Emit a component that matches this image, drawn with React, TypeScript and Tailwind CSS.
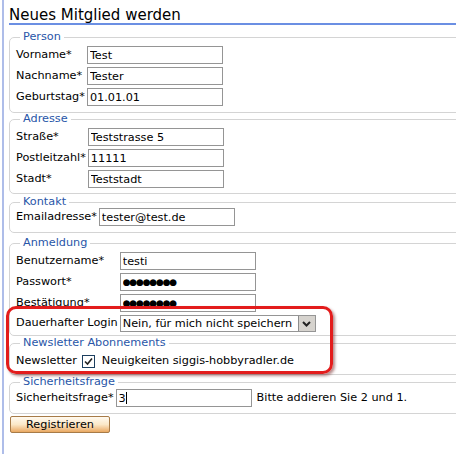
import React from 'react'

const font = { fontFamily: '"DejaVu Sans", Verdana, sans-serif' }

function Field({ value, dots }: { value: string; dots?: boolean }) {
  return (
    <input
      readOnly
      value={value}
      className={`h-[18px] w-[136px] border border-[#959595] bg-white px-[2px] leading-[16px] text-black outline-none ${dots ? 'text-[9px] tracking-[-1.2px]' : 'text-[11.25px]'}`}
      style={font}
    />
  )
}

function Group({ legend, className, children }: { legend: string; className: string; children: React.ReactNode }) {
  return (
    <fieldset className={`rounded-[5px] border border-[#d4d4d4] px-[6px] ${className}`}>
      <legend className="ml-[4px] px-[3px] text-[11.25px] leading-[12px] text-[#2856a8]">{legend}</legend>
      {children}
    </fieldset>
  )
}

export default function App() {
  return (
    <div className="relative h-[454px] w-[456px] overflow-hidden bg-white pl-[2px] text-[11.25px] text-black" style={font}>
      <div className="h-full w-[490px] border-l-2 border-[#aebde9] pl-[5px]">
        <h1 className="border-b-2 border-[#6b8fe3] pt-[8px] text-[15px] leading-[15px] font-normal">Neues Mitglied werden</h1>

        <Group legend="Person" className="mt-[6px] pt-[3px] pb-[6px]">
          <div className="grid grid-cols-[auto_auto] justify-start items-center gap-x-[2px] gap-y-[3px]">
            <span>Vorname*</span>
            <Field value="Test" />
            <span>Nachname*</span>
            <Field value="Tester" />
            <span>Geburtstag*</span>
            <Field value="01.01.01" />
          </div>
        </Group>

        <Group legend="Adresse" className="mt-0 pt-[3px] pb-[5px]">
          <div className="grid grid-cols-[auto_auto] justify-start items-center gap-x-[2px] gap-y-[3px]">
            <span>Straße*</span>
            <Field value="Teststrasse 5" />
            <span>Postleitzahl*</span>
            <Field value="11111" />
            <span>Stadt*</span>
            <Field value="Teststadt" />
          </div>
        </Group>

        <Group legend="Kontakt" className="mt-[2px] pt-0 pb-[6px]">
          <div className="grid grid-cols-[auto_auto] justify-start items-center gap-x-[2px]">
            <span>Emailadresse*</span>
            <Field value="tester@test.de" />
          </div>
        </Group>

        <Group legend="Anmeldung" className="mt-[4px] pt-[3px] pb-[3px]">
          <div className="grid grid-cols-[auto_auto] justify-start items-center gap-x-[2px] gap-y-[3px]">
            <span>Benutzername*</span>
            <Field value="testi" />
            <span>Passwort*</span>
            <Field value="●●●●●●●●" dots />
            <span>Bestätigung*</span>
            <Field value="●●●●●●●●" dots />
            <span>Dauerhafter Login</span>
            <div className="flex h-[17px] w-[196px] items-center border border-[#959595] bg-white">
              <span className="flex-1 whitespace-nowrap pl-[2px] leading-[15px]">Nein, für mich nicht speichern</span>
              <span className="flex h-[15px] w-[17px] items-center justify-center border-l border-[#8c8c8c] bg-[#d6d3ce]">
                <svg width="9" height="6" viewBox="0 0 9 6">
                  <path d="M1 1 L4.5 4.5 L8 1" fill="none" stroke="#222" strokeWidth="2" />
                </svg>
              </span>
            </div>
          </div>
        </Group>

        <Group legend="Newsletter Abonnements" className="mt-[1px] pt-[3px] pb-[4px]">
          <div className="flex h-[18px] items-center">
            <span>Newsletter</span>
            <span className="ml-[5px] flex h-[13px] w-[13px] items-center justify-center border border-[#1c3f60] bg-white">
              <svg width="9" height="9" viewBox="0 0 9 9">
                <path d="M1 4.5 L3.5 7 L8 1.5" fill="none" stroke="#222" strokeWidth="1.6" />
              </svg>
            </span>
            <span className="ml-[7px]">Neuigkeiten siggis-hobbyradler.de</span>
          </div>
        </Group>

        <Group legend="Sicherheitsfrage" className="mt-[1px] pt-[1px] pb-[6px]">
          <div className="flex items-center">
            <span className="mr-[2px]">Sicherheitsfrage*</span>
            <div className="relative">
              <Field value="3" />
              <span className="absolute left-[10px] top-[3px] h-[12px] w-px bg-black" />
            </div>
            <span className="ml-[5px]">Bitte addieren Sie 2 und 1.</span>
          </div>
        </Group>

        <button
          className="mt-[2px] ml-[1px] h-[17px] w-[100px] rounded-[2px] border border-[#a77b48] bg-gradient-to-b from-[#fffaf0] via-[#fbe8c8] to-[#e9a860] text-[11.25px] leading-[15px] text-black"
          style={font}
        >
          Registrieren
        </button>
      </div>

      <div className="pointer-events-none absolute left-[6px] top-[306px] h-[68px] w-[327px] rounded-[10px] border-[3px] border-[#e31c1c] shadow-[2px_2px_3px_rgba(90,0,0,0.45)]" />
    </div>
  )
}
